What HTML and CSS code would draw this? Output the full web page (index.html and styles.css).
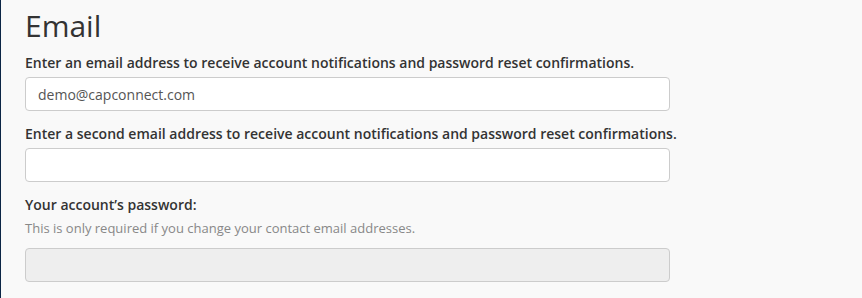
FILE: index.html
```html
<!DOCTYPE html>
<html>
<head>
<meta charset="utf-8">
<link rel="stylesheet" href="styles.css">
</head>
<body>
<div class="page">
  <h1 class="title">Email</h1>
  <div class="field">
    <label class="label">Enter an email address to receive account notifications and password reset confirmations.</label>
    <input class="input" type="text" value="demo@capconnect.com">
  </div>
  <div class="field">
    <label class="label">Enter a second email address to receive account notifications and password reset confirmations.</label>
    <input class="input" type="text" value="">
  </div>
  <div class="field">
    <label class="label">Your account’s password:</label>
    <div class="help">This is only required if you change your contact email addresses.</div>
    <input class="input input-disabled" type="password" disabled>
  </div>
</div>
</body>
</html>
```
FILE: styles.css
```css
html, body {
  margin: 0;
  padding: 0;
  height: 100%;
}
body {
  background: #f9f9f9;
  font-family: "Open Sans", "Noto Sans", sans-serif;
  color: #333;
  border-left: 1px solid #0b2545;
  box-sizing: border-box;
}
.page {
  padding: 8px 0 0 24px;
}
.title {
  font-size: 30px;
  font-weight: 400;
  line-height: 36px;
  margin: 0 0 9px 0;
}
.field {
  display: flex;
  flex-direction: column;
  align-items: flex-start;
  margin-bottom: 13px;
}
.label {
  font-size: 14px;
  font-weight: 600;
  line-height: 20px;
  margin-bottom: 4px;
  white-space: nowrap;
}
.help {
  font-size: 13px;
  color: #888;
  line-height: 18px;
  margin-bottom: 11px;
  white-space: nowrap;
}
.input {
  box-sizing: border-box;
  height: 34px;
  width: 645px;
  border: 1px solid #ccc;
  border-radius: 4px;
  background: #fff;
  padding: 6px 12px;
  font-family: "Open Sans", "Noto Sans", sans-serif;
  font-size: 14px;
  color: #555;
  margin: 0;
}
.input-disabled {
  background: #eee;
}
```
